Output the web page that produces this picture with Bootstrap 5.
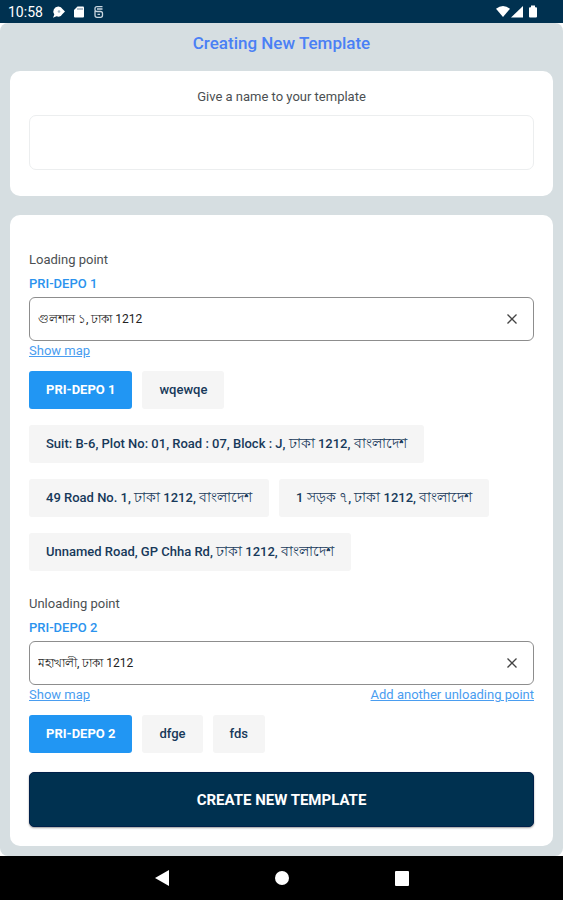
<!DOCTYPE html>
<html lang="en">
<head>
<meta charset="utf-8">
<meta name="viewport" content="width=device-width, initial-scale=1">
<title>Creating New Template</title>
<link rel="stylesheet" href="https://cdn.jsdelivr.net/npm/bootstrap@5.3.0/dist/css/bootstrap.min.css">
<style>
  body { font-family: Roboto, "Noto Sans", sans-serif; font-size: 13px; line-height: 20px; color: #4b4f52; }
  .status-bar { background: #003150; height: 23px; padding: 0 25px 0 8px; font-size: 14px; }
  .screen { background: #d6dee1; border-radius: 8px; padding: 0 10px; padding-bottom: 10px; }
  .screen-title { font-size: 17px; line-height: 24px; font-weight: 500; color: #4a80f5; padding: 8px 0 16px; }
  .panel { background: #fff; border-radius: 10px; padding: 0 19px; }
  .name-panel { padding-top: 16px; padding-bottom: 26px; margin-bottom: 19px; }
  .points-panel { padding-top: 35px; padding-bottom: 19px; }
  .name-input { height: 55px; border: 1px solid #eceeef; border-radius: 7px; }
  .depot { color: #2b93ee; font-weight: 500; margin: 4px 0 3px; }
  .address { height: 44px; border: 1px solid #8d8d8d; border-radius: 6px; padding: 0 13px 0 8px; }
  .address input { font-size: 12px; color: #222; background: none; outline: 0; min-width: 0; }
  .clear { width: 16px; height: 16px; }
  .action { color: #4a9df0; }
  .chips { gap: 16px 10px; margin-top: 10px; }
  .chip { height: 38px; border: 0; border-radius: 3px; background: #f5f5f5; color: #17395a; padding: 0 17px; font-weight: 500; }
  .chip [lang=bn] { font-size: 14px; line-height: 16px; }
  .chip.chosen { background: #2196f3; color: #fff; font-weight: 700; }
  .unloading { margin-top: 23px; }
  .create { height: 55px; margin-top: 19px; border: 1px solid #00204a; border-radius: 5px; background: #003150; color: #fff; font-size: 15px; font-weight: 700; box-shadow: 0 1px 2px #0006; }
  .system-nav { background: #000; height: 44px; gap: 104px; }
</style>
</head>
<body class="d-flex flex-column min-vh-100 bg-white">
<header class="status-bar d-flex align-items-center justify-content-between text-white">
  <div class="d-flex align-items-center">
    <span>10:58</span>
    <svg class="ms-2" width="14" height="14" viewBox="0 0 14 14" aria-hidden="true"><path fill="#fff" d="M7.500 1.500a4.700 4.700 0 0 1 4 2.500L14 6.500l-2.500 2.500a4.800 4.800 0 0 1-6 2.200L2 12.800l1.300-3.300A5 5 0 0 1 7.500 1.500z"/><circle cx="8" cy="6.500" r="1.300" fill="#9db4c3"/></svg>
    <svg class="ms-2" width="12" height="14" viewBox="0 0 12 14" aria-hidden="true"><path fill="#fff" d="M4.500 1.500H10a1 1 0 0 1 1 1v9a1 1 0 0 1-1 1H2a1 1 0 0 1-1-1V5z"/><path stroke="#617f95" d="M5 3v2M7 3v2M9 3v2"/></svg>
    <svg class="ms-2" width="12" height="14" viewBox="0 0 12 14" fill="none" stroke="#c9d6df" stroke-width="1.300" aria-hidden="true"><path d="M9.500 1.700H4Q2 1.700 2 3.500v1.300q0 1.700 2 1.700h3.500q2 0 2 2v1.800q0 2-2 2H4q-2 0-2-2V6M4 4h5.500M4.500 9.300h2.500"/></svg>
  </div>
  <svg width="42" height="16" viewBox="0 0 42 16" fill="#fff" aria-hidden="true"><path d="M0 4.800Q7 -.8 14 4.800L7 13z"/><path d="M15 13.500 27 2v11.500z"/><path d="M35 1.500h4v1.700h1q1 0 1 1V12.500q0 1-1 1h-6q-1 0-1-1V4.200q0-1 1-1h1z"/></svg>
</header>

<main class="screen flex-grow-1">
  <h1 class="screen-title text-center m-0">Creating New Template</h1>

  <section class="panel name-panel">
    <label for="template-name" class="d-block text-center mb-2">Give a name to your template</label>
    <input id="template-name" type="text" class="name-input d-block w-100 px-2">
  </section>

  <section class="panel points-panel">
    <div>
      <label for="loading" class="d-block">Loading point</label>
      <div class="depot">PRI-DEPO 1</div>
      <div class="address d-flex align-items-center">
        <input id="loading" type="text" class="border-0 p-0 flex-grow-1" value="গুলশান ১, ঢাকা 1212">
        <button type="button" class="clear btn p-0 border-0 d-flex" aria-label="Clear loading point"><svg width="16" height="16" viewBox="0 0 16 16" stroke="#444" stroke-width="1.300"><path d="M3.500 3.500l9 9M12.500 3.500l-9 9"/></svg></button>
      </div>
      <div><a href="#" class="action">Show map</a></div>
      <div class="chips d-flex flex-wrap">
        <button type="button" class="chip chosen">PRI-DEPO 1</button>
        <button type="button" class="chip">wqewqe</button>
        <button type="button" class="chip">Suit: B-6, Plot No: 01, Road : 07, Block : J, <span lang="bn">ঢাকা</span> 1212, <span lang="bn">বাংলাদেশ</span></button>
        <button type="button" class="chip">49 Road No. 1, <span lang="bn">ঢাকা</span> 1212, <span lang="bn">বাংলাদেশ</span></button>
        <button type="button" class="chip">1 <span lang="bn">সড়ক ৭</span>, <span lang="bn">ঢাকা</span> 1212, <span lang="bn">বাংলাদেশ</span></button>
        <button type="button" class="chip">Unnamed Road, GP Chha Rd, <span lang="bn">ঢাকা</span> 1212, <span lang="bn">বাংলাদেশ</span></button>
      </div>
    </div>

    <div class="unloading">
      <label for="unloading" class="d-block">Unloading point</label>
      <div class="depot">PRI-DEPO 2</div>
      <div class="address d-flex align-items-center">
        <input id="unloading" type="text" class="border-0 p-0 flex-grow-1" value="মহাখালী, ঢাকা 1212">
        <button type="button" class="clear btn p-0 border-0 d-flex" aria-label="Clear unloading point"><svg width="16" height="16" viewBox="0 0 16 16" stroke="#444" stroke-width="1.300"><path d="M3.500 3.500l9 9M12.500 3.500l-9 9"/></svg></button>
      </div>
      <div class="d-flex justify-content-between">
        <a href="#" class="action">Show map</a>
        <a href="#" class="action">Add another unloading point</a>
      </div>
      <div class="chips d-flex flex-wrap">
        <button type="button" class="chip chosen">PRI-DEPO 2</button>
        <button type="button" class="chip">dfge</button>
        <button type="button" class="chip">fds</button>
      </div>
    </div>

    <button type="submit" class="create d-block w-100">CREATE NEW TEMPLATE</button>
  </section>
</main>

<nav class="system-nav d-flex align-items-center justify-content-center" aria-label="System">
  <button type="button" class="btn p-0 border-0 d-flex" aria-label="Back"><svg width="16" height="18" viewBox="0 0 16 18" fill="#fff"><path d="M1 9 15 1v16z"/></svg></button>
  <button type="button" class="btn p-0 border-0 d-flex" aria-label="Home"><svg width="16" height="18" viewBox="0 0 16 18" fill="#fff"><circle cx="8" cy="9" r="7"/></svg></button>
  <button type="button" class="btn p-0 border-0 d-flex" aria-label="Recent apps"><svg width="16" height="18" viewBox="0 0 16 18" fill="#fff"><rect x="1" y="2" width="14" height="15" rx="1"/></svg></button>
</nav>
<script src="https://cdn.jsdelivr.net/npm/bootstrap@5.3.0/dist/js/bootstrap.bundle.min.js"></script>
</body>
</html>
